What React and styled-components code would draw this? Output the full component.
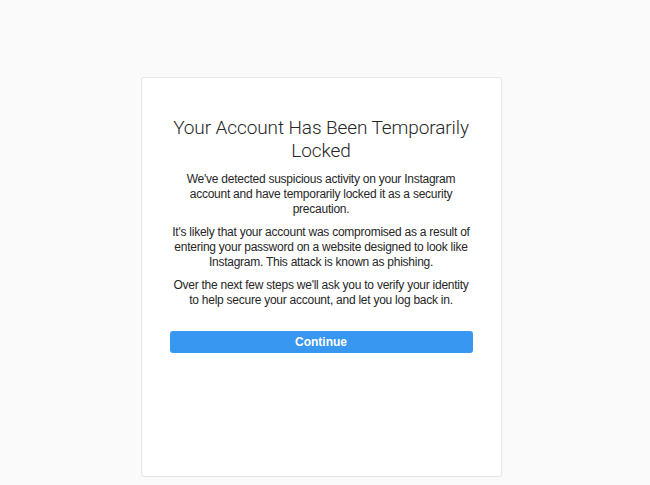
import React from 'react'
import styled, { createGlobalStyle } from 'styled-components'

const GlobalStyle = createGlobalStyle`
  body {
    margin: 0;
    background: #fafafa;
    font-family: "Liberation Sans", Arial, Helvetica, sans-serif;
    color: #262626;
  }
`

const Page = styled.main`
  display: flex;
  justify-content: center;
  padding: 77px 8px 0 0;
  min-height: 485px;
  box-sizing: border-box;
`

const Card = styled.section`
  box-sizing: border-box;
  width: 361px;
  height: 400px;
  background: #fff;
  border: 1px solid #e6e6e6;
  border-radius: 3px;
  padding: 38px 28px 0;
  display: flex;
  flex-direction: column;
  align-items: center;
`

const Title = styled.h1`
  margin: 0 0 10px;
  font-family: Roboto, "Liberation Sans", sans-serif;
  font-weight: 300;
  font-size: 19px;
  letter-spacing: -0.1px;
  line-height: 23px;
  text-align: center;
  color: #262626;
`

const Paragraph = styled.p`
  margin: 0 0 8px;
  font-size: 12px;
  letter-spacing: -0.25px;
  line-height: 15px;
  text-align: center;
  color: #262626;
`

const Button = styled.button`
  margin-top: 15px;
  width: 100%;
  height: 22px;
  border: 0;
  border-radius: 3px;
  background: #3897f0;
  color: #fff;
  font-family: "Liberation Sans", Arial, sans-serif;
  font-weight: 700;
  font-size: 12px;
  cursor: pointer;
`

const App = () => {
  return (
    <>
      <GlobalStyle />
      <Page>
        <Card>
          <Title>Your Account Has Been Temporarily Locked</Title>
          <Paragraph>
            We've detected suspicious activity on your Instagram account and have temporarily locked it as a security precaution.
          </Paragraph>
          <Paragraph>
            It's likely that your account was compromised as a result of entering your password on a website designed to look like Instagram. This attack is known as phishing.
          </Paragraph>
          <Paragraph>
            Over the next few steps we'll ask you to verify your identity to help secure your account, and let you log back in.
          </Paragraph>
          <Button>Continue</Button>
        </Card>
      </Page>
    </>
  )
}

export default App
